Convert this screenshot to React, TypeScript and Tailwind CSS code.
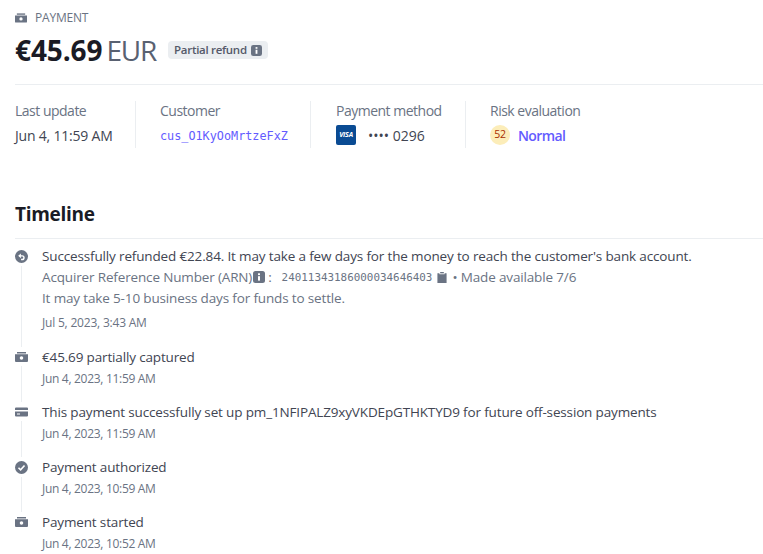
const sans = { fontFamily: '"Open Sans", "Noto Sans", sans-serif' };
const mono = { fontFamily: '"DejaVu Sans Mono", monospace' };

function CashIcon({ className = "" }: { className?: string }) {
  return (
    <svg viewBox="0 0 13 12" className={className} fill="currentColor">
      <path d="M2 1h9v1.5H2z" />
      <path fillRule="evenodd" d="M0 3.2h13V10a1 1 0 0 1-1 1H1a1 1 0 0 1-1-1V3.2zM6.5 5.2a1.8 1.8 0 1 0 0 3.6 1.8 1.8 0 0 0 0-3.6z" />
    </svg>
  );
}

function CardIcon({ className = "" }: { className?: string }) {
  return (
    <svg viewBox="0 0 13 12" className={className} fill="currentColor">
      <path d="M0 2.5a1 1 0 0 1 1-1h11a1 1 0 0 1 1 1V4H0z" />
      <path fillRule="evenodd" d="M0 5.5h13v4a1 1 0 0 1-1 1H1a1 1 0 0 1-1-1zM2 7.5v1h3v-1z" />
    </svg>
  );
}

function CheckIcon({ className = "" }: { className?: string }) {
  return (
    <svg viewBox="0 0 12 12" className={className}>
      <circle cx="6" cy="6" r="6" fill="currentColor" />
      <path d="M3.2 6.2l2 2 3.6-4" fill="none" stroke="#fff" strokeWidth="1.5" />
    </svg>
  );
}

function RefundIcon({ className = "" }: { className?: string }) {
  return (
    <svg viewBox="0 0 12 12" className={className}>
      <circle cx="6" cy="6" r="6" fill="currentColor" />
      <path d="M3.6 5.4h3a1.7 1.7 0 0 1 0 3.4H5.6" fill="none" stroke="#fff" strokeWidth="1.3" />
      <path d="M5.4 3.2L3 5.4l2.4 2.2z" fill="#fff" />
    </svg>
  );
}

function InfoIcon({ className = "" }: { className?: string }) {
  return (
    <svg viewBox="0 0 12 12" className={className}>
      <rect width="12" height="12" rx="2.5" fill="currentColor" />
      <rect x="5" y="2.3" width="2" height="1.8" fill="#fff" />
      <rect x="5" y="5.2" width="2" height="4.4" fill="#fff" />
    </svg>
  );
}

function ClipboardIcon({ className = "" }: { className?: string }) {
  return (
    <svg viewBox="0 0 10 12" className={className} fill="currentColor">
      <path d="M3 0h4v1.5H3z" />
      <path d="M0 1.3h2.2v1.2h5.6V1.3H10V12H0z" />
    </svg>
  );
}

function Meta({ label, children, divider = true, width }: { label: string; children: React.ReactNode; divider?: boolean; width: string }) {
  return (
    <div className={`${width} shrink-0 ${divider ? "border-r border-[#ebeef1]" : ""} h-[47px]`}>
      <div className="text-[14px] leading-[20px] tracking-[-0.5px] text-[#6a7383]">{label}</div>
      <div className="mt-[4px] flex h-[20px] items-center">{children}</div>
    </div>
  );
}

function TimelineMark({ icon, last }: { icon: React.ReactNode; last?: boolean }) {
  return (
    <div className="mr-[14px] flex w-[13px] shrink-0 flex-col items-center pt-[4px]">
      <div className="text-[#6a7383]">{icon}</div>
      {!last && <div className="mt-[3px] w-px flex-1 bg-[#ebeef1]" />}
    </div>
  );
}

function Event({
  icon,
  title,
  date,
  last = false,
}: {
  icon: React.ReactNode;
  title: string;
  date: string;
  last?: boolean;
}) {
  return (
    <div className={`flex ${last ? "" : "h-[55px]"}`}>
      <TimelineMark icon={icon} last={last} />
      <div>
        <div className="text-[13.5px] leading-[20px] tracking-[-0.15px] text-[#414552]">{title}</div>
        <div className="mt-[2px] text-[12px] leading-[20px] tracking-[-0.3px] text-[#6a7383]">{date}</div>
      </div>
    </div>
  );
}

export default function App() {
  return (
    <div className="h-[554px] w-[763px] overflow-hidden bg-white pl-[15px]" style={sans}>
      <div className="flex h-[27px] items-center pt-[8px] text-[12px] text-[#6a7383]">
        <CashIcon className="mr-[8px] h-[12px] w-[12px]" />
        <span className="tracking-[-0.2px]">PAYMENT</span>
      </div>

      <div className="mt-[3px] flex h-[40px] items-center">
        <span className="text-[28px] font-bold leading-[40px] tracking-[-0.1px] text-[#1a1b25]">€45.69</span>
        <span className="ml-[4px] text-[28px] leading-[40px] tracking-[-1.2px] text-[#596171]">EUR</span>
        <span className="ml-[12px] flex h-[18px] items-center gap-[4px] rounded-[4px] bg-[#ebeef1] px-[6px] text-[11.5px] font-semibold tracking-[-0.3px] text-[#545969]">
          Partial refund
          <InfoIcon className="h-[11px] w-[11px] text-[#6a7383]" />
        </span>
      </div>

      <div className="mt-[14px] border-t border-[#ebeef1] pt-[16px]">
        <div className="flex">
          <Meta label="Last update" width="w-[121px]">
            <span className="text-[14px] tracking-[-0.2px] text-[#414552]">Jun 4, 11:59 AM</span>
          </Meta>
          <div className="w-[24px] shrink-0" />
          <Meta label="Customer" width="w-[151px]">
            <span className="pt-[3px] text-[11.8px] text-[#635bff]" style={mono}>
              cus_O1KyOoMrtzeFxZ
            </span>
          </Meta>
          <div className="w-[25px] shrink-0" />
          <Meta label="Payment method" width="w-[130px]">
            <span className="flex h-[20px] w-[20px] items-center justify-center rounded-[2px] bg-[#0a4b93] text-[7px] font-bold italic tracking-[-0.2px] text-white">
              VISA
            </span>
            <span className="ml-[12px] text-[14px] text-[#414552]">•••• 0296</span>
          </Meta>
          <div className="w-[24px] shrink-0" />
          <Meta label="Risk evaluation" width="w-[120px]" divider={false}>
            <span className="flex h-[20px] w-[20px] items-center justify-center rounded-full bg-[#fcedb9] text-[10.5px] tracking-[-0.3px] text-[#a82c00]">
              52
            </span>
            <span className="ml-[8px] text-[14px] font-semibold tracking-[-0.6px] text-[#635bff]">Normal</span>
          </Meta>
        </div>
      </div>

      <h2 className="mt-[52px] text-[19px] font-bold leading-[28px] tracking-[-0.3px] text-[#1a1b25]">Timeline</h2>

      <div className="mt-[10px] border-t border-[#ebeef1] pt-[7px]">
        <div className="flex h-[101px]">
          <TimelineMark icon={<RefundIcon className="h-[13px] w-[13px]" />} />
          <div>
            <div className="text-[13.5px] leading-[20px] tracking-[-0.15px] text-[#414552]">
              Successfully refunded €22.84. It may take a few days for the money to reach the customer's bank account.
            </div>
            <div className="flex h-[22px] items-center text-[13.5px] tracking-[-0.15px] text-[#6a7383]">
              Acquirer Reference Number (ARN)
              <InfoIcon className="ml-[1px] h-[12px] w-[12px]" />
              <span className="ml-[3px]">:</span>
              <span className="ml-[10px] pt-[2px] text-[10.9px] tracking-normal" style={mono}>
                24011343186000034646403
              </span>
              <ClipboardIcon className="ml-[5px] h-[11px] w-[10px]" />
              <span className="ml-[5px]">• Made available 7/6</span>
            </div>
            <div className="text-[13.5px] leading-[20px] tracking-[-0.15px] text-[#6a7383]">
              It may take 5-10 business days for funds to settle.
            </div>
            <div className="mt-[5px] text-[12px] leading-[20px] tracking-[-0.2px] text-[#6a7383]">Jul 5, 2023, 3:43 AM</div>
          </div>
        </div>
        <Event icon={<CashIcon className="h-[12px] w-[13px]" />} title="€45.69 partially captured" date="Jun 4, 2023, 11:59 AM" />
        <Event
          icon={<CardIcon className="h-[12px] w-[13px]" />}
          title="This payment successfully set up pm_1NFIPALZ9xyVKDEpGTHKTYD9 for future off-session payments"
          date="Jun 4, 2023, 11:59 AM"
        />
        <Event icon={<CheckIcon className="h-[13px] w-[13px]" />} title="Payment authorized" date="Jun 4, 2023, 10:59 AM" />
        <Event icon={<CashIcon className="h-[12px] w-[13px]" />} title="Payment started" date="Jun 4, 2023, 10:52 AM" last />
      </div>
    </div>
  );
}
